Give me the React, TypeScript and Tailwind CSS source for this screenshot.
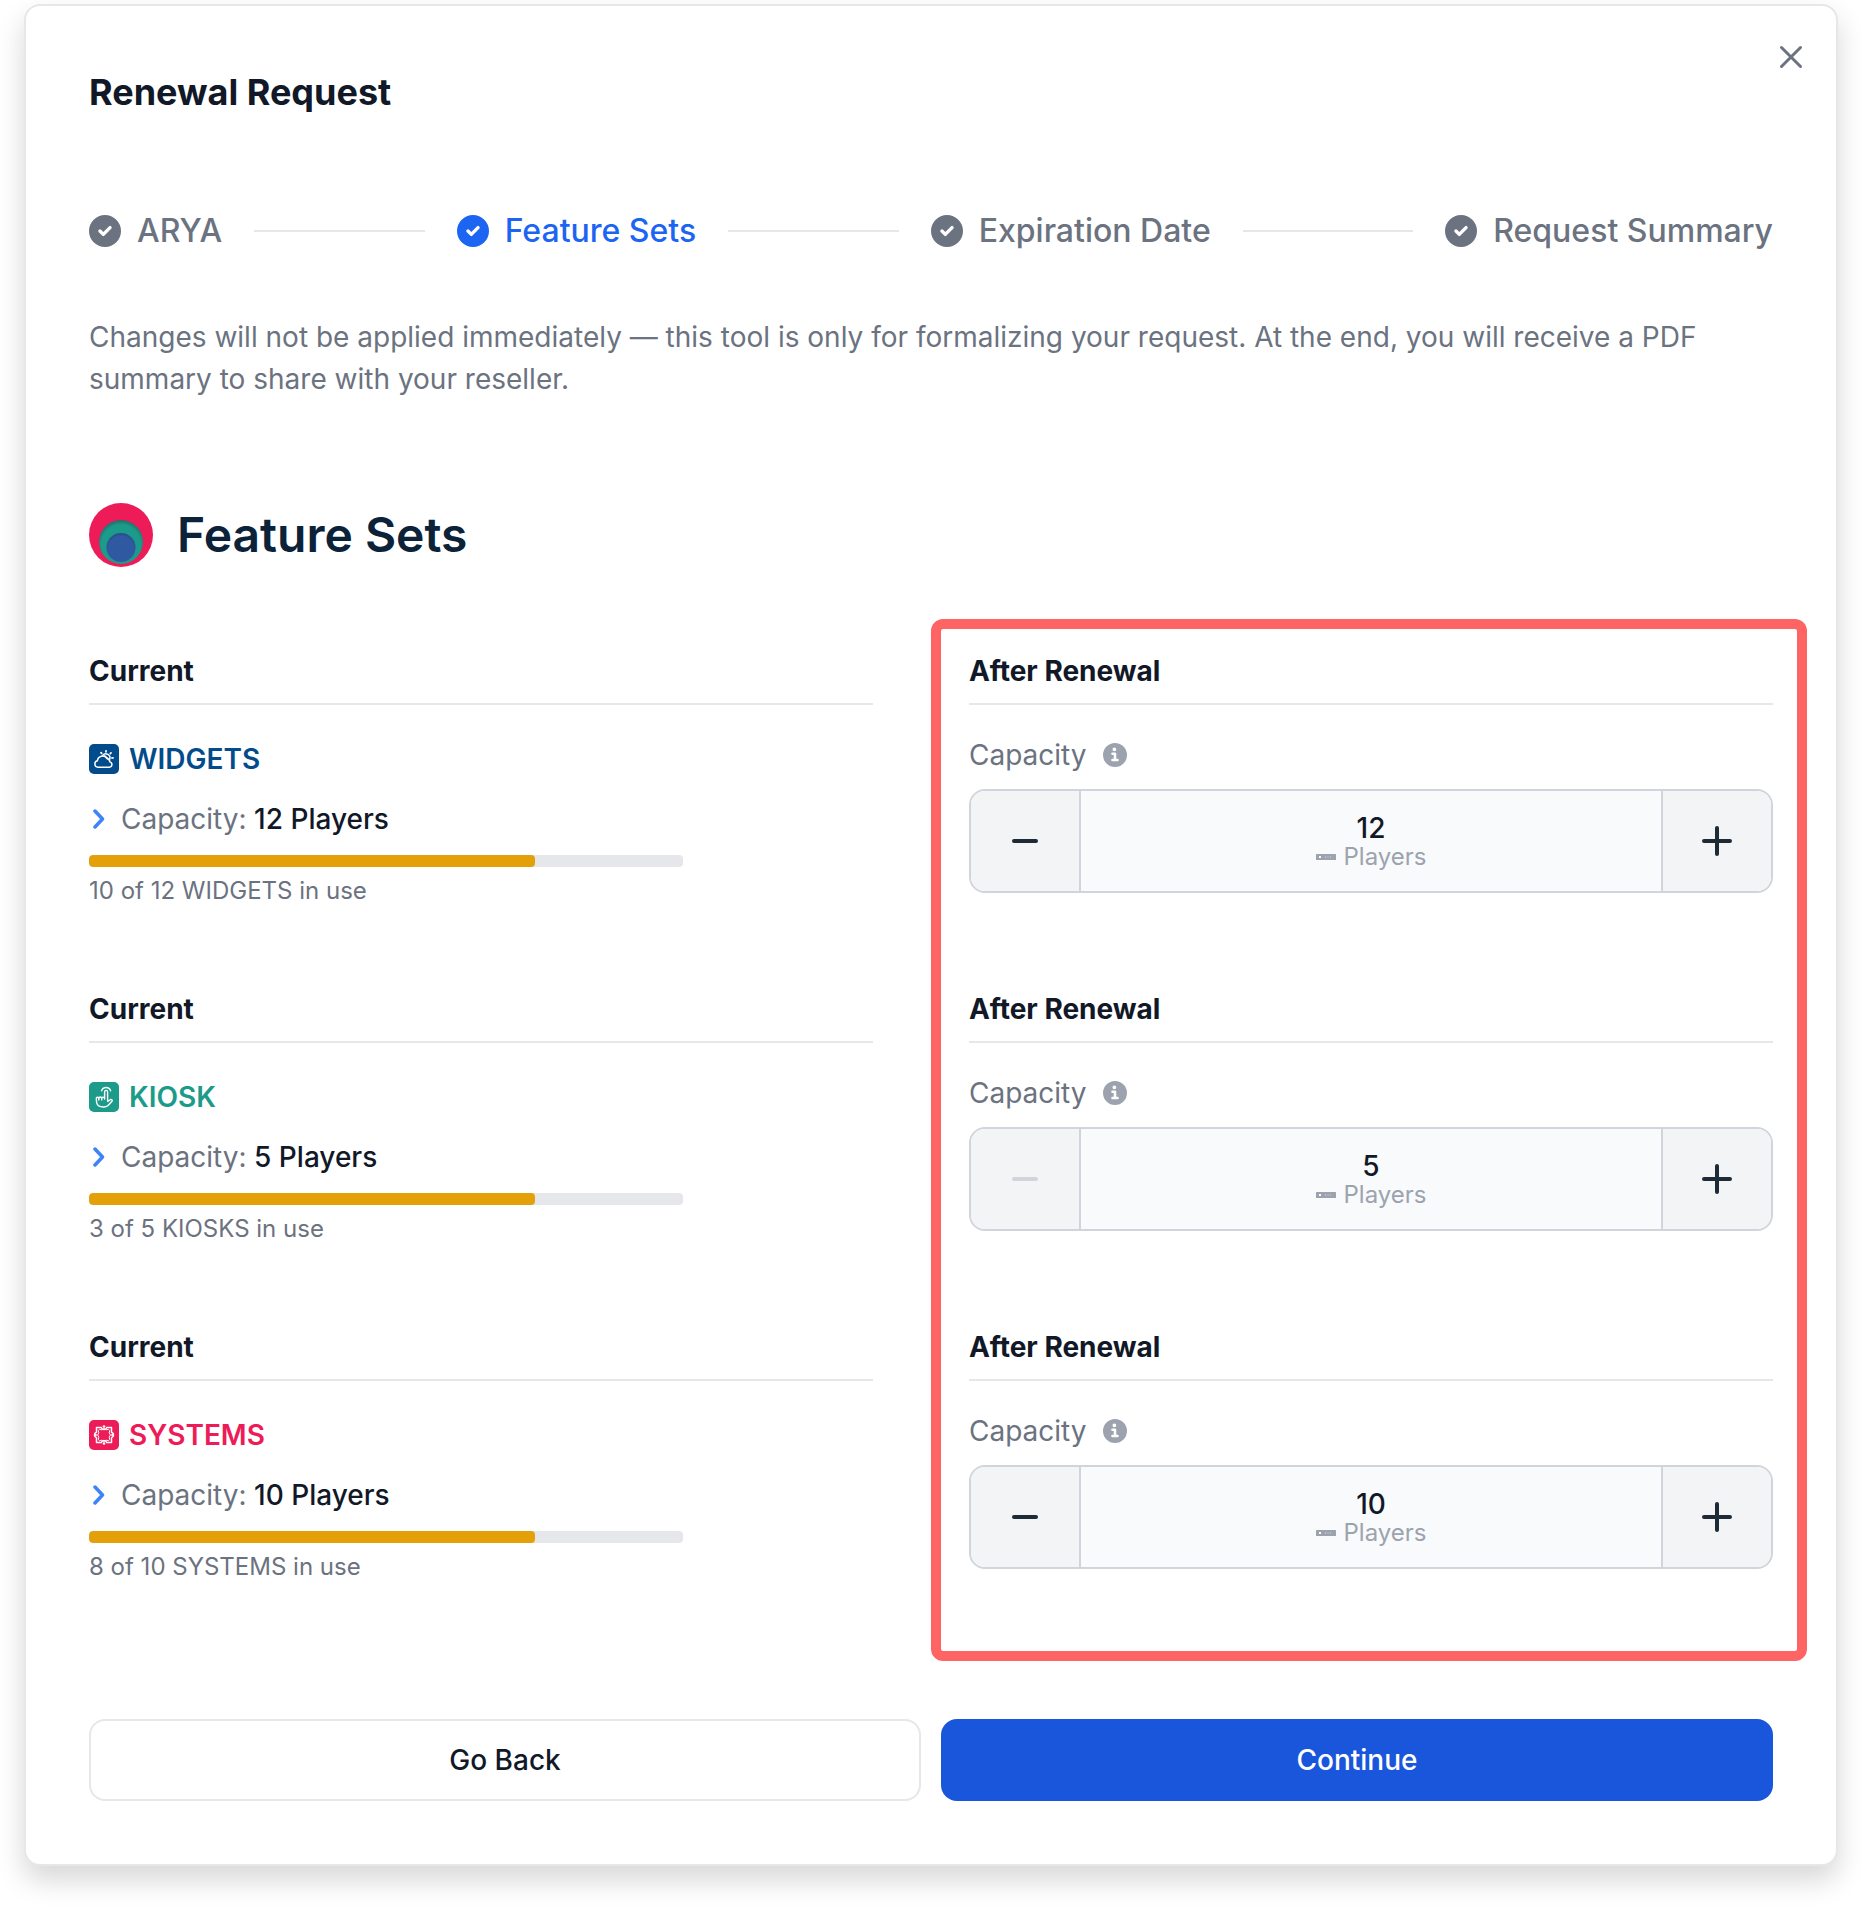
import { Fragment, useState } from "react";

const steps = [
  { label: "ARYA", active: false },
  { label: "Feature Sets", active: true },
  { label: "Expiration Date", active: false },
  { label: "Request Summary", active: false },
];

const WidgetsIcon = () => (
  <svg
    viewBox="0 0 30 30"
    className="size-[30px] shrink-0"
    fill="none"
    stroke="white"
    strokeWidth="1.5"
    strokeLinecap="round"
    strokeLinejoin="round"
    aria-hidden="true"
  >
    <rect width="30" height="30" rx="5" fill="#034c8c" stroke="none" />
    <path d="M9 23.2a3.3 3.3 0 0 1-.6-6.5 5.2 5.2 0 0 1 9.6-2.1 3.9 3.9 0 0 1 2.9 3.3 2.7 2.7 0 0 1-.5 5.3Z" />
    <path d="M13.6 11.4a4.1 4.1 0 0 1 7 4.1M15.6 11.8l3.6 3.2" />
    <path d="M17 6.8v1M12 8.6l.6.8M22 8.9l-.7.7M24 13.9h-1" strokeWidth="1.8" />
  </svg>
);

const KioskIcon = () => (
  <svg
    viewBox="0 0 30 30"
    className="size-[30px] shrink-0"
    fill="none"
    stroke="white"
    strokeWidth="1.4"
    strokeLinecap="round"
    strokeLinejoin="round"
    aria-hidden="true"
  >
    <rect width="30" height="30" rx="5" fill="#1c9a8a" stroke="none" />
    <path d="M15.6 17V9.9a1.5 1.5 0 0 1 3 0v9.4l2.9-1.6c1.2-.6 2.3.5 1.5 1.6l-4 4.3c-1.2 1.1-2.4 1.4-4.4 1.4-4.6 0-6.9-1.8-7.1-5.2l-.2-3.6c0-1.3 2.2-1.3 2.5 0 .2-1.6 2.6-1.6 2.9-.1.3-1.4 2.6-1.4 2.9.9Z" />
    <path d="M9.8 16.2v1.8M12.7 16.1v1.8" />
    <path d="M12.6 8.8a4.7 4.7 0 0 1 9 0" />
  </svg>
);

const SystemsIcon = () => (
  <svg
    viewBox="0 0 30 30"
    className="size-[30px] shrink-0"
    fill="none"
    stroke="white"
    strokeWidth="1.5"
    strokeLinejoin="round"
    aria-hidden="true"
  >
    <rect width="30" height="30" rx="5" fill="#ee1b59" stroke="none" />
    <path d="M7.5 7.5h4.8a2.8 2.8 0 0 0 5.4 0h4.8v4.8a2.8 2.8 0 0 1 0 5.4v4.8h-4.8a2.8 2.8 0 0 0-5.4 0H7.5v-4.8a2.8 2.8 0 0 1 0-5.4Z" />
    <path
      d="M10.5 9.3 12.8 9.8 15 8.6l2.2 1.2 2.3-.5 1.2 1.2-.5 2.3 1.2 2.2-1.2 2.2.5 2.3-1.2 1.2-2.3-.5-2.2 1.2-2.2-1.2-2.3.5-1.2-1.2.5-2.3L8.6 15l1.2-2.2-.5-2.3Z"
      strokeWidth="1"
    />
    <circle cx="15" cy="6.5" r="1.3" fill="white" stroke="none" />
    <circle cx="15" cy="23.5" r="1.3" fill="white" stroke="none" />
    <circle cx="6.5" cy="15" r="1.3" fill="white" stroke="none" />
    <circle cx="23.5" cy="15" r="1.3" fill="white" stroke="none" />
  </svg>
);

const features = [
  {
    id: "widgets",
    name: "WIDGETS",
    color: "text-[#034c8c]",
    icon: <WidgetsIcon />,
    capacity: 12,
    min: 10,
    usage: "10 of 12 WIDGETS in use",
    percent: 75,
  },
  {
    id: "kiosk",
    name: "KIOSK",
    color: "text-[#1c9a8a]",
    icon: <KioskIcon />,
    capacity: 5,
    min: 5,
    usage: "3 of 5 KIOSKS in use",
    percent: 75,
  },
  {
    id: "systems",
    name: "SYSTEMS",
    color: "text-[#ee1b59]",
    icon: <SystemsIcon />,
    capacity: 10,
    min: 8,
    usage: "8 of 10 SYSTEMS in use",
    percent: 75,
  },
];

const Logo = () => (
  <svg viewBox="0 0 64 64" className="size-16 shrink-0" aria-hidden="true">
    <defs>
      <radialGradient id="logo-teal" cx="0.5" cy="0.56" r="0.56">
        <stop offset="0.8" stopColor="#1c9a8a" />
        <stop offset="1" stopColor="#1b7168" />
      </radialGradient>
      <radialGradient id="logo-blue" cx="0.5" cy="0.56" r="0.56">
        <stop offset="0.8" stopColor="#2f5aa2" />
        <stop offset="1" stopColor="#274a86" />
      </radialGradient>
    </defs>
    <circle cx="32" cy="32" r="32" fill="#ee1b59" />
    <circle cx="32" cy="39" r="22" fill="url(#logo-teal)" />
    <circle cx="32" cy="44.5" r="14.5" fill="url(#logo-blue)" />
  </svg>
);

const CheckIcon = () => (
  <svg viewBox="0.5 0.5 19 19" className="size-8 shrink-0" fill="currentColor" aria-hidden="true">
    <path d="M10 .5a9.5 9.5 0 1 0 9.5 9.5A9.51 9.51 0 0 0 10 .5Zm3.707 8.207-4 4a1 1 0 0 1-1.414 0l-2-2a1 1 0 0 1 1.414-1.414L9 10.586l3.293-3.293a1 1 0 0 1 1.414 1.414Z" />
  </svg>
);

const InfoIcon = () => (
  <svg viewBox="0.5 0.5 19 19" className="size-6" fill="currentColor" aria-hidden="true">
    <path d="M10 .5a9.5 9.5 0 1 0 9.5 9.5A9.51 9.51 0 0 0 10 .5ZM9.5 4a1.5 1.5 0 1 1 0 3 1.5 1.5 0 0 1 0-3ZM12 15H8a1 1 0 0 1 0-2h1v-3H8a1 1 0 0 1 0-2h2a1 1 0 0 1 1 1v4h1a1 1 0 0 1 0 2Z" />
  </svg>
);

const PlayerIcon = () => (
  <svg viewBox="0 0 20 6" className="w-5 h-[6px]" aria-hidden="true">
    <rect width="20" height="6" rx="0.5" fill="#9ca3af" />
    <rect x="3" y="2" width="2" height="2" fill="white" />
    <path d="M9.5 2v2M12 2v2M14.5 2v2" stroke="#b9bec7" strokeWidth="1" />
  </svg>
);

const ColumnTitle = ({ children }: { children: string }) => (
  <h3 className="pb-[11px] border-b-2 border-[#e5e7eb] text-[28px] leading-[42px] font-bold text-[#111827]">
    {children}
  </h3>
);

const CapacityStepper = ({ id, initial, min }: { id: string; initial: number; min: number }) => {
  const [value, setValue] = useState(initial);

  return (
    <>
      <div className="mt-[29px] flex items-center gap-4 text-[28px] leading-[42px] text-[#6b7280]">
        <label htmlFor={id}>Capacity</label>
        <button type="button" aria-label="About capacity" className="text-[#9ca3af]">
          <InfoIcon />
        </button>
      </div>
      <div className="mt-[13px] h-[104px] flex border-2 border-[#d1d5db] rounded-2xl overflow-hidden text-[#1f2a37]">
        <button
          type="button"
          aria-label="Decrease capacity"
          disabled={value <= min}
          onClick={() => setValue(value - 1)}
          className="w-[110px] shrink-0 flex items-center justify-center bg-[#f3f4f6] border-r-2 border-[#d1d5db] disabled:text-[#d1d5db]"
        >
          <svg viewBox="0 0 30 30" className="size-[30px]" stroke="currentColor" strokeWidth="4" strokeLinecap="round" aria-hidden="true">
            <path d="M4 15h22" />
          </svg>
        </button>
        <div className="grow min-w-0 pt-1 flex flex-col items-center justify-center bg-[#f9fafb]">
          <input
            id={id}
            type="text"
            inputMode="numeric"
            value={value}
            onChange={(e) => setValue(Number(e.target.value) || 0)}
            className="w-full h-7 text-center text-[28px] leading-7 font-medium text-[#111827] bg-transparent outline-none"
          />
          <div className="flex items-center gap-2 text-2xl leading-[30px] text-[#9ca3af]">
            <PlayerIcon />
            <span>Players</span>
          </div>
        </div>
        <button
          type="button"
          aria-label="Increase capacity"
          onClick={() => setValue(value + 1)}
          className="w-[110px] shrink-0 flex items-center justify-center bg-[#f3f4f6] border-l-2 border-[#d1d5db]"
        >
          <svg viewBox="0 0 30 30" className="size-[30px]" stroke="currentColor" strokeWidth="4" strokeLinecap="round" aria-hidden="true">
            <path d="M2 15h26M15 2v26" />
          </svg>
        </button>
      </div>
    </>
  );
};

const App = () => {
  return (
    <main className="px-6 pt-1 pb-11 bg-white font-['Inter',sans-serif]">
      <section
        role="dialog"
        aria-labelledby="dialog-title"
        className="relative px-[63px] pt-16 pb-[63px] bg-white border-2 border-[#e5e7eb] rounded-2xl shadow-[0_14px_28px_rgba(0,0,0,0.16)]"
      >
        <button
          type="button"
          aria-label="Close"
          className="absolute top-[31px] right-[25px] p-2 text-[#6b7280]"
        >
          <svg viewBox="0 0 24 24" className="size-6" fill="none" stroke="currentColor" strokeWidth="3" strokeLinecap="round" aria-hidden="true">
            <path d="m2.5 2.5 19 19M21.5 2.5l-19 19" />
          </svg>
        </button>

        <h1 id="dialog-title" className="text-4xl leading-[44px] font-bold text-[#111827]">
          Renewal Request
        </h1>

        <ol className="mt-[93px] flex items-center gap-8 text-[32px] leading-[48px] font-medium text-[#6b7280]">
          {steps.map((step, index) => (
            <Fragment key={step.label}>
              {index > 0 && <li aria-hidden="true" className="grow h-[2px] bg-[#e5e7eb]" />}
              <li
                aria-current={step.active ? "step" : undefined}
                className={
                  step.active
                    ? "flex items-center gap-4 whitespace-nowrap text-[#1c64f2]"
                    : "flex items-center gap-4 whitespace-nowrap"
                }
              >
                <CheckIcon />
                {step.label}
              </li>
            </Fragment>
          ))}
        </ol>

        <p className="mt-[61px] text-[28px] leading-[42px] text-[#6b7280]">
          Changes will not be applied immediately — this tool is only for formalizing your request. At
          the end, you will receive a PDF summary to share with your reseller.
        </p>

        <h2 className="mt-[103px] flex items-center gap-6 text-5xl leading-[64px] font-semibold text-[#0c2238]">
          <Logo />
          Feature Sets
        </h2>

        <div className="mt-[83px] grid grid-cols-[784fr_804fr] gap-x-24 gap-y-[79px]">
          {/* highlight around the editable column */}
          <div className="col-start-2 row-start-1 row-span-3 -mt-[31px] -mb-[76px] -ml-[38px] -mr-[34px] border-10 border-[#ff6464] rounded-xl pointer-events-none" />

          {features.map((feature, index) => (
            <Fragment key={feature.id}>
              <div className={["col-start-1 row-start-1", "col-start-1 row-start-2", "col-start-1 row-start-3"][index]}>
                <ColumnTitle>Current</ColumnTitle>
                <div className={`mt-[33px] flex items-center gap-[10px] text-[28px] leading-[42px] font-semibold ${feature.color}`}>
                  {feature.icon}
                  {feature.name}
                </div>
                <button
                  type="button"
                  className="mt-[18px] flex items-center gap-3 text-[28px] leading-[42px] font-medium text-[#111827]"
                >
                  <svg viewBox="0 0 20 20" className="size-5" fill="none" stroke="#3f83f8" strokeWidth="3.5" strokeLinecap="round" strokeLinejoin="round" aria-hidden="true">
                    <path d="m6 2 7.5 8L6 18" />
                  </svg>
                  <span>
                    <span className="font-normal text-[#6b7280]">Capacity:</span> {feature.capacity} Players
                  </span>
                </button>
                <div className="mt-[15px] max-w-[594px] h-3 bg-[#e5e7eb] rounded-[4px] overflow-hidden">
                  <div className="h-full bg-[#e3a008] rounded-[4px]" style={{ width: `${feature.percent}%` }} />
                </div>
                <p className="mt-[6px] text-2xl leading-9 text-[#6b7280]">{feature.usage}</p>
              </div>

              <div className={["col-start-2 row-start-1", "col-start-2 row-start-2", "col-start-2 row-start-3"][index]}>
                <ColumnTitle>After Renewal</ColumnTitle>
                <CapacityStepper id={`${feature.id}-capacity`} initial={feature.capacity} min={feature.min} />
              </div>
            </Fragment>
          ))}
        </div>

        <div className="mt-[134px] grid grid-cols-2 gap-5 text-[28px] leading-[42px] font-medium">
          <button type="button" className="h-[82px] border-2 border-[#e5e7eb] rounded-2xl bg-white text-[#111827]">
            Go Back
          </button>
          <button type="button" className="h-[82px] rounded-2xl bg-[#1a56db] text-white">
            Continue
          </button>
        </div>
      </section>
    </main>
  );
};

export default App;
